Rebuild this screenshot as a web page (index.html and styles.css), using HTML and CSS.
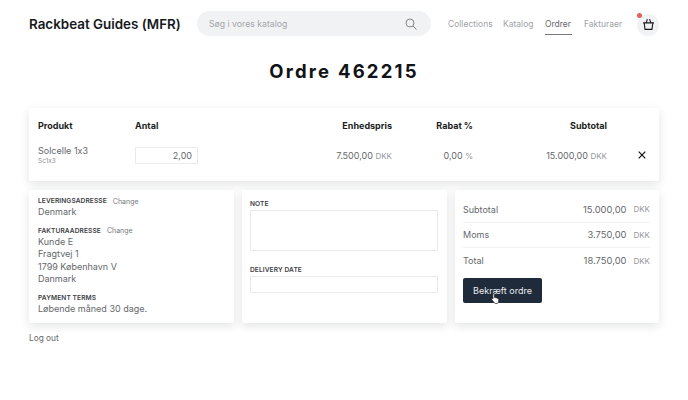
FILE: index.html
```html
<!DOCTYPE html>
<html lang="da">
<head>
<meta charset="utf-8">
<title>Ordre 462215</title>
<link rel="stylesheet" href="styles.css">
</head>
<body>
<div class="page">
  <header class="topbar">
    <div class="brand">Rackbeat Guides (MFR)</div>
    <div class="search">
      <span class="search-text">Søg i vores katalog</span>
      <svg class="search-icon" viewBox="0 0 12 12" width="12" height="12"><circle cx="5" cy="5" r="4" fill="none" stroke="#77797d" stroke-width="0.9"/><path d="M8 8l3.400 3.400" stroke="#77797d" stroke-width="1" fill="none"/></svg>
    </div>
    <nav class="nav">
      <a class="nav-link">Collections</a>
      <a class="nav-link">Katalog</a>
      <a class="nav-link active">Ordrer</a>
      <a class="nav-link">Fakturaer</a>
    </nav>
    <div class="basket">
      <span class="dot"></span>
      <svg viewBox="0 0 12 12" width="13" height="13"><path d="M1 4.500h10M2 4.500l.8 6h6.400l.8-6M3.800 4.500L5 1M8.200 4.500L7 1" fill="none" stroke="#16181d" stroke-width="1"/></svg>
    </div>
  </header>

  <h1 class="title">Ordre 462215</h1>

  <section class="card lines">
    <div class="row head">
      <div>Produkt</div><div>Antal</div><div class="num">Enhedspris</div><div class="num">Rabat %</div><div class="num">Subtotal</div><div></div>
    </div>
    <div class="row item">
      <div><div class="pname">Solcelle 1x3</div><div class="psku">Sc1x3</div></div>
      <div><div class="qty">2,00</div></div>
      <div class="num">7.500,00 <span class="unit">DKK</span></div>
      <div class="num">0,00 <span class="unit">%</span></div>
      <div class="num">15.000,00 <span class="unit">DKK</span></div>
      <div class="remove"><svg viewBox="0 0 8 8" width="8" height="8"><path d="M.7.7l6.600 6.600M7.300.7L.7 7.300" stroke="#111" stroke-width="1.200" fill="none"/></svg></div>
    </div>
  </section>

  <div class="columns">
    <section class="card address">
      <div class="block">
        <div class="label-line"><span class="label">LEVERINGSADRESSE</span><a class="change">Change</a></div>
        <div class="text">Denmark</div>
      </div>
      <div class="block">
        <div class="label-line"><span class="label">FAKTURAADRESSE</span><a class="change">Change</a></div>
        <div class="text">Kunde E</div>
        <div class="text">Fragtvej 1</div>
        <div class="text">1799 København V</div>
        <div class="text">Danmark</div>
      </div>
      <div class="block">
        <div class="label-line"><span class="label">PAYMENT TERMS</span></div>
        <div class="text">Løbende måned 30 dage.</div>
      </div>
    </section>

    <section class="card fields">
      <div class="label field-label">NOTE</div>
      <div class="box note"></div>
      <div class="label field-label date-label">DELIVERY DATE</div>
      <div class="box date"></div>
    </section>

    <section class="card totals">
      <div class="total-row"><span>Subtotal</span><span class="amount">15.000,00</span><span class="unit">DKK</span></div>
      <div class="total-row"><span>Moms</span><span class="amount">3.750,00</span><span class="unit">DKK</span></div>
      <div class="total-row last"><span>Total</span><span class="amount">18.750,00</span><span class="unit">DKK</span></div>
      <div class="btn">Bekræft ordre
        <svg class="cursor" viewBox="0 0 12 16" width="9" height="13"><path d="M3.500 1.200c.7 0 1.100.5 1.100 1.100v4.400l.3-.1c.6-.2 1.100 0 1.300.4.6-.2 1.100 0 1.300.5.6-.2 1.200 0 1.400.6.6-.1 1.300.2 1.300 1v2.600c0 1.300-.8 2.600-2 3H5.500c-.8-.4-1.400-1.200-2-2.100L1 9.400c-.3-.6-.1-1.100.4-1.300.5-.2 1 0 1.300.4l-.3-5.200c0-.7.5-1.500 1.100-1.500z" fill="#fff" stroke="#1a1a1a" stroke-width="0.9"/></svg>
      </div>
    </section>
  </div>

  <a class="logout">Log out</a>
</div>
</body>
</html>
```

FILE: styles.css
```css
* { box-sizing: border-box; }
html, body { margin: 0; padding: 0; background: #fff; }
body {
  width: 688px;
  height: 400px;
  overflow: hidden;
  font-family: "Inter", "Liberation Sans", sans-serif;
  font-feature-settings: "calt" 0;
  color: #55575b;
}
.page { padding: 11px 29px 0; }

.topbar { display: flex; align-items: center; height: 25px; }
.brand { width: 168px; font-size: 13.400px; font-weight: 600; color: #17191d; white-space: nowrap; }
.search {
  width: 234px; height: 25px; border-radius: 13px; background: #f1f2f4;
  display: flex; align-items: center; justify-content: space-between;
  padding: 0 14px 0 12px;
}
.search-text { font-size: 8.700px; color: #a3a5a9; }
.search-icon { display: block; }
.nav { display: flex; margin-left: 17px; gap: 12px; height: 25px; align-items: center; }
.nav-link { font-size: 8.500px; color: #a0a2a6; line-height: 21px; height: 21px; margin-top: 1px; white-space: nowrap; }
.nav-link:nth-child(1) { width: 43px; }
.nav-link:nth-child(2) { width: 30px; }
.nav-link:nth-child(3) { width: 27px; }
.nav-link:nth-child(4) { width: 37px; }
.nav-link.active { color: #66686c; border-bottom: 1px solid #77797d; }
.basket {
  position: relative; width: 22px; height: 22px; margin-left: 16px; margin-top: 2px;
  border-radius: 50%; background: #f1f2f4;
  display: flex; align-items: center; justify-content: center;
}
.dot { position: absolute; left: 0; top: -1px; width: 5px; height: 5px; border-radius: 50%; background: #e0635a; }

.title {
  margin: 23px 0 0; text-align: center; font-size: 18.500px; line-height: 24px;
  font-weight: 700; letter-spacing: 2.200px; color: #111317;
}

.card { background: #fff; box-shadow: 0 3px 10px rgba(30, 35, 45, .13); border-radius: 2px; }
.lines { margin-top: 25px; height: 73px; padding: 0 0 0 9px; }
.row { display: grid; grid-template-columns: 97px 100px 157px 81px 134px 52px; align-items: center; }
.num { text-align: right; white-space: nowrap; }
.head { height: 35px; font-size: 9px; font-weight: 700; color: #1b1d21; }
.item { height: 24px; font-size: 9px; color: #66686c; }
.pname { font-size: 9px; line-height: 13px; }
.psku { font-size: 6.500px; line-height: 9px; color: #8f9195; }
.qty {
  width: 63px; height: 17px; border: 1px solid #e8e9eb; border-radius: 1px;
  text-align: right; padding-right: 5px; line-height: 15px; font-size: 9px;
}
.unit { color: #94969a; font-size: 8px; }
.remove { display: flex; justify-content: flex-end; padding-right: 13px; }

.columns { display: grid; grid-template-columns: 205px 205px 204px; gap: 8px; margin-top: 9px; }
.columns .card { height: 133px; }
.address { padding: 6px 9px 0; }
.block { margin-bottom: 7px; }
.label-line { display: flex; gap: 6px; align-items: center; height: 10px; }
.label { font-size: 6.600px; font-weight: 600; color: #3c3e42; white-space: nowrap; letter-spacing: .1px; }
.change { font-size: 7px; color: #77797d; }
.text { font-size: 9px; line-height: 12.500px; color: #66686c; }

.fields { padding: 9px 8px 0; }
.field-label { line-height: 10px; height: 11px; }
.box { border: 1px solid #e8e9eb; border-radius: 1px; width: 188px; }
.note { height: 41px; }
.date-label { margin-top: 14px; }
.date { height: 17px; }

.totals { padding: 7px 9px 0 8px; }
.total-row {
  display: flex; align-items: center; height: 25.500px; font-size: 9px; color: #66686c;
  border-bottom: 1px solid #f1f2f4;
}
.total-row.last { border-bottom: 0; }
.amount { margin-left: auto; font-size: 9.400px; }
.total-row .unit { margin-left: 7px; }
.btn {
  position: relative; width: 79px; height: 25px; margin-top: 4.500px; border-radius: 2px;
  background: #1f2a3a; color: #e8eaee; font-size: 9px; line-height: 25px; text-align: center;
}
.cursor { position: absolute; left: 28px; top: 14px; }

.logout { display: block; margin-top: 10px; font-size: 8.300px; color: #66686c; }
```
